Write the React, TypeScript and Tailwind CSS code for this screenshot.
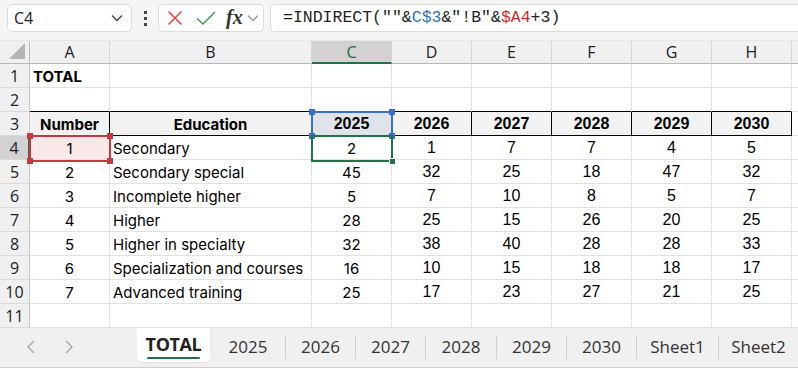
import React from "react";

const COLS = [80, 202, 80, 80, 80, 80, 80, 80];
const LETTERS = ["A", "B", "C", "D", "E", "F", "G", "H"];
const YEARS = ["2025", "2026", "2027", "2028", "2029", "2030"];
const DATA: [string, string, number[]][] = [
  ["1", "Secondary", [2, 1, 7, 7, 4, 5]],
  ["2", "Secondary special", [45, 32, 25, 18, 47, 32]],
  ["3", "Incomplete higher", [5, 7, 10, 8, 5, 7]],
  ["4", "Higher", [28, 25, 15, 26, 20, 25]],
  ["5", "Higher in specialty", [32, 38, 40, 28, 28, 33]],
  ["6", "Specialization and courses", [16, 10, 15, 18, 18, 17]],
  ["7", "Advanced training", [25, 17, 23, 27, 21, 25]],
];

const aptos: React.CSSProperties = { fontFamily: "Inter, 'Noto Sans', sans-serif", fontSize: 15, paddingTop: 3 };
const arial: React.CSSProperties = { fontFamily: "'Liberation Sans', Arial, sans-serif", fontSize: 16, paddingTop: 1 };
const ui = { fontFamily: "'Open Sans', 'Noto Sans', sans-serif" };

function RowHeader({ n, active }: { n: number; active?: boolean }) {
  return (
    <div
      className={
        "w-[30px] h-[24px] shrink-0 flex items-center justify-center text-[16px] text-[#222] border-b border-[#dadada] pt-[1px] " +
        (active ? "bg-[#d2d2d2] border-r-2 border-r-[#217346] text-[#1e6a40]" : "bg-[#f0f0f0] border-r border-r-[#c6c6c6]")
      }
      style={ui}
    >
      {n}
    </div>
  );
}

function Cell({
  w,
  children,
  className = "",
  style,
}: {
  w: number;
  children?: React.ReactNode;
  className?: string;
  style?: React.CSSProperties;
}) {
  return (
    <div
      className={"h-[24px] shrink-0 flex items-center border-r border-b overflow-visible whitespace-nowrap text-[16px] text-black " + className}
      style={{ width: w, ...style }}
    >
      {children}
    </div>
  );
}

function Corner({ pos, color }: { pos: string; color: string }) {
  return <div className={"absolute w-[6px] h-[6px] " + pos} style={{ background: color }} />;
}

export default function App() {
  return (
    <div className="w-[798px] h-[368px] overflow-hidden bg-white relative select-none">
      {/* Toolbar */}
      <div className="h-[41px] bg-[#f5f5f5] flex items-start pt-[4px] pl-[7px] gap-0 border-b border-[#e6e6e6]">
        <div className="w-[125px] h-[28px] bg-white border border-[#dcdcdc] rounded-[5px] flex items-center justify-between pl-[6px] pr-[8px]">
          <span className="text-[16px] text-[#222]" style={ui}>C4</span>
          <svg width="12" height="8" viewBox="0 0 12 8"><path d="M1 1.5 L6 6.5 L11 1.5" fill="none" stroke="#444" strokeWidth="1.4" /></svg>
        </div>
        <div className="w-[26px] h-[28px] flex flex-col items-center justify-center gap-[3px]">
          <div className="w-[3px] h-[3px] bg-[#444]" />
          <div className="w-[3px] h-[3px] bg-[#444]" />
          <div className="w-[3px] h-[3px] bg-[#444]" />
        </div>
        <div className="w-[106px] h-[28px] bg-white border border-[#dcdcdc] rounded-[5px] flex items-center pl-[8px]">
          <svg width="16" height="16" viewBox="0 0 16 16" className="mr-[13px]"><path d="M1.5 1.5 L14.5 14.5 M14.5 1.5 L1.5 14.5" stroke="#e8474a" strokeWidth="1.6" /></svg>
          <svg width="20" height="16" viewBox="0 0 20 16" className="mr-[10px]"><path d="M1 8.5 L7 14 L19 2" fill="none" stroke="#3d9d52" strokeWidth="1.6" /></svg>
          <span className="text-[20px] italic font-bold text-[#333] leading-none -mt-[2px]" style={{ fontFamily: "'Liberation Serif', serif" }}>fx</span>
          <svg width="12" height="8" viewBox="0 0 12 8" className="ml-[4px]"><path d="M1 1.5 L6 6.5 L11 1.5" fill="none" stroke="#999" strokeWidth="1.3" /></svg>
        </div>
        <div className="flex-1 h-[28px] ml-[6px] bg-white border border-[#dcdcdc] border-r-0 rounded-l-[5px] flex items-center pl-[12px]">
          <span className="text-[16.5px] text-[#222]" style={{ fontFamily: "'Liberation Mono', monospace" }}>
            =INDIRECT(""&amp;<span className="text-[#2f72c4]">C$3</span>&amp;"!B"&amp;<span className="text-[#c9302c]">$A4</span>+3)
          </span>
        </div>
      </div>

      {/* Grid */}
      <div className="relative">
        {/* Column headers */}
        <div className="flex h-[23px]">
          <div className="w-[30px] h-[23px] shrink-0 bg-[#f0f0f0] border-r border-b border-[#b9b9b9] relative">
            <svg width="16" height="16" viewBox="0 0 16 16" className="absolute right-[4px] bottom-[4px]"><path d="M16 0 L16 16 L0 16 Z" fill="#b5b5b5" /></svg>
          </div>
          {COLS.map((w, i) => (
            <div
              key={i}
              className={
                "h-[23px] shrink-0 flex items-center justify-center text-[16px] border-r border-r-[#d4d4d4] " +
                (i === 2 ? "bg-[#d2d2d2] border-b-2 border-b-[#217346] text-[#1e6a40]" : "bg-[#f0f0f0] border-b border-b-[#b9b9b9] text-[#222]")
              }
              style={{ width: w, ...ui }}
            >
              {LETTERS[i]}
            </div>
          ))}
          <div className="flex-1 h-[23px] bg-[#f0f0f0] border-b border-[#b9b9b9]" />
        </div>

        {/* Row 1 */}
        <div className="flex">
          <RowHeader n={1} />
          <Cell w={80} className="border-[#e1e1e1] pl-[3px] font-bold" style={aptos}>TOTAL</Cell>
          {COLS.slice(1).map((w, i) => (
            <Cell key={i} w={w} className="border-[#e1e1e1]" />
          ))}
          <div className="flex-1 border-b border-[#e1e1e1]" />
        </div>
        {/* Row 2 */}
        <div className="flex">
          <RowHeader n={2} />
          {COLS.map((w, i) => (
            <Cell key={i} w={w} className="border-r-[#e1e1e1] border-b-black" />
          ))}
          <div className="flex-1 border-b border-[#e1e1e1]" />
        </div>
        {/* Row 3 */}
        <div className="flex">
          <RowHeader n={3} />
          <Cell w={80} className="border-black bg-[#f2f2f2] justify-center font-bold" style={aptos}>Number</Cell>
          <Cell w={202} className="border-black bg-[#f2f2f2] justify-center font-bold" style={aptos}>Education</Cell>
          {YEARS.map((y, i) => (
            <Cell key={y} w={80} className={"border-black justify-center font-bold " + (i === 0 ? "bg-[#dfe3ec]" : "bg-[#f2f2f2]")} style={arial}>
              {y}
            </Cell>
          ))}
          <div className="flex-1 border-b border-[#e1e1e1]" />
        </div>
        {/* Data rows */}
        {DATA.map(([num, edu, vals], r) => (
          <div className="flex" key={r}>
            <RowHeader n={r + 4} active={r === 0} />
            <Cell w={80} className={"border-[#e1e1e1] justify-center " + (r === 0 ? "bg-[#fae8e8]" : "")} style={aptos}>{num}</Cell>
            <Cell w={202} className="border-[#e1e1e1] pl-[3px]" style={aptos}>{edu}</Cell>
            {vals.map((v, i) => (
              <Cell key={i} w={80} className="border-[#e1e1e1] justify-center" style={i === 0 ? aptos : arial}>
                {v}
              </Cell>
            ))}
            <div className="flex-1 border-b border-[#e1e1e1]" />
          </div>
        ))}
        {/* Row 11 */}
        <div className="flex">
          <RowHeader n={11} />
          {COLS.map((w, i) => (
            <Cell key={i} w={w} className="border-[#e1e1e1]" />
          ))}
          <div className="flex-1 border-b border-[#e1e1e1]" />
        </div>

        {/* A4 reference highlight (red) */}
        <div className="absolute left-[29px] top-[94px] w-[82px] h-[27px] border-2 border-[#c4393e]">
          <Corner pos="-left-[4px] -top-[4px]" color="#c4393e" />
          <Corner pos="-right-[4px] -top-[4px]" color="#c4393e" />
          <Corner pos="-left-[4px] -bottom-[4px]" color="#c4393e" />
          <Corner pos="-right-[4px] -bottom-[4px]" color="#c4393e" />
        </div>
        {/* C3 reference highlight (blue) */}
        <div className="absolute left-[311px] top-[70px] w-[82px] h-[26px] border-2 border-[#3a6fca]">
          <Corner pos="-left-[4px] -top-[4px]" color="#3a6fca" />
          <Corner pos="-right-[4px] -top-[4px]" color="#3a6fca" />
          <Corner pos="-left-[4px] -bottom-[4px]" color="#3a6fca" />
          <Corner pos="-right-[4px] -bottom-[4px]" color="#3a6fca" />
        </div>
        {/* Active cell C4 */}
        <div className="absolute left-[311px] top-[94px] w-[82px] h-[27px] border-2 border-[#217346]">
          <div className="absolute -right-[5px] -bottom-[5px] w-[7px] h-[7px] bg-[#217346] border border-white" />
        </div>
      </div>

      {/* Sheet tabs */}
      <div className="absolute left-0 right-0 top-[328px] h-[40px] bg-[#f0f0f0] border-b border-[#d0d0d0] flex items-start" style={ui}>
        <div className="w-[137px] h-[38px] flex items-center pl-[26px] gap-[28px]">
          <svg width="10" height="14" viewBox="0 0 10 14"><path d="M8 1 L2 7 L8 13" fill="none" stroke="#a8a8a8" strokeWidth="1.4" /></svg>
          <svg width="10" height="14" viewBox="0 0 10 14"><path d="M2 1 L8 7 L2 13" fill="none" stroke="#a8a8a8" strokeWidth="1.4" /></svg>
        </div>
        <div className="w-[73px] h-[34px] bg-white rounded-b-[5px] flex flex-col items-center justify-center relative shadow-[0_1px_1px_rgba(0,0,0,0.06)]">
          <span className="text-[18px] font-bold text-[#222] leading-none -mt-[3px] tracking-[-0.4px]">TOTAL</span>
          <div className="absolute bottom-[3px] left-[10px] right-[10px] h-[2.5px] bg-[#217346] rounded-full" />
        </div>
        {[
          ["2025", 75],
          ["2026", 70],
          ["2027", 70],
          ["2028", 71],
          ["2029", 70],
          ["2030", 70],
          ["Sheet1", 82],
          ["Sheet2", 80],
        ].map(([t, w], i) => (
          <div key={i} className="h-[38px] flex items-center shrink-0" style={{ width: w as number }}>
            <div className={"w-px h-[23px] " + (i === 0 ? "bg-transparent" : "bg-[#cfcfcf]")} />
            <span className="flex-1 text-center text-[17px] text-[#333]">{t}</span>
          </div>
        ))}
      </div>
    </div>
  );
}
